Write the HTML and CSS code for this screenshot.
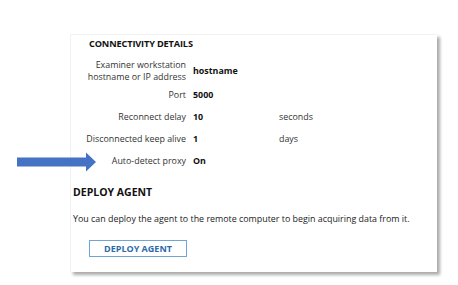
FILE: index.html
```html
<!DOCTYPE html>
<html>
<head>
<meta charset="utf-8">
<link rel="stylesheet" href="styles.css">
</head>
<body>
<div class="stage">
  <div class="card">
    <section class="conn">
      <h2 class="conn-title">CONNECTIVITY DETAILS</h2>
      <div class="grid">
        <div class="lbl">Examiner workstation<br>hostname or IP address</div>
        <div class="val">hostname</div>
        <div class="unit"></div>

        <div class="lbl">Port</div>
        <div class="val">5000</div>
        <div class="unit"></div>

        <div class="lbl">Reconnect delay</div>
        <div class="val">10</div>
        <div class="unit">seconds</div>

        <div class="lbl">Disconnected keep alive</div>
        <div class="val">1</div>
        <div class="unit">days</div>

        <div class="lbl">Auto-detect proxy</div>
        <div class="val">On</div>
        <div class="unit"></div>
      </div>
    </section>
    <section class="deploy">
      <h2 class="deploy-title">DEPLOY AGENT</h2>
      <p class="deploy-text">You can deploy the agent to the remote computer to begin acquiring data from it.</p>
      <button class="deploy-btn">DEPLOY AGENT</button>
    </section>
  </div>
  <svg class="arrow" width="80" height="20" viewBox="0 0 80 20">
    <polygon points="0,5.5 69,5.5 69,0.5 79,10 69,19.5 69,14.5 0,14.5" fill="#4472c4"/>
  </svg>
</div>
</body>
</html>
```

FILE: styles.css
```css
html, body {
  margin: 0;
  padding: 0;
  background: #ffffff;
}
body {
  font-family: "Open Sans", "Noto Sans", sans-serif;
  color: #222;
}
.stage {
  position: relative;
  width: 458px;
  height: 285px;
  padding-top: 34px;
  box-sizing: border-box;
}
.card {
  margin-left: 70px;
  width: 367px;
  height: 238px;
  box-sizing: border-box;
  background: #fff;
  border-top: 1px solid #f2f2f2;
  border-left: 1px solid #f2f2f2;
  box-shadow: 3px 3px 3px rgba(0, 0, 0, 0.33);
  padding-top: 3px;
}
.conn-title {
  margin: 0 0 8px 18px;
  font-size: 9.2px;
  line-height: 12px;
  font-weight: 700;
  letter-spacing: -0.15px;
  color: #111;
}
.grid {
  display: grid;
  grid-template-columns: 115px 79px auto;
  grid-template-rows: 26px;
  grid-auto-rows: 22px;
  column-gap: 7px;
  align-items: center;
  font-size: 8.9px;
  line-height: 12.5px;
}
.lbl {
  text-align: right;
  color: #333;
}
.val {
  font-weight: 700;
  color: #111;
}
.unit {
  color: #333;
}
.deploy {
  padding-left: 2px;
}
.deploy-title {
  margin: 13px 0 0 0;
  font-size: 10.5px;
  line-height: 14px;
  font-weight: 700;
  color: #111;
}
.deploy-text {
  margin: 14px 0 0 0;
  font-size: 8.9px;
  line-height: 12px;
  color: #222;
  white-space: nowrap;
}
.deploy-btn {
  display: block;
  margin: 15px 0 0 16px;
  width: 98px;
  height: 17px;
  padding: 0;
  box-sizing: border-box;
  background: #fff;
  border: 1px solid #6fa4d6;
  border-radius: 0;
  font-family: "Open Sans", "Noto Sans", sans-serif;
  font-size: 9px;
  font-weight: 700;
  color: #2d6aa8;
  line-height: 15px;
}
.arrow {
  position: absolute;
  left: 17px;
  top: 152px;
}
```
